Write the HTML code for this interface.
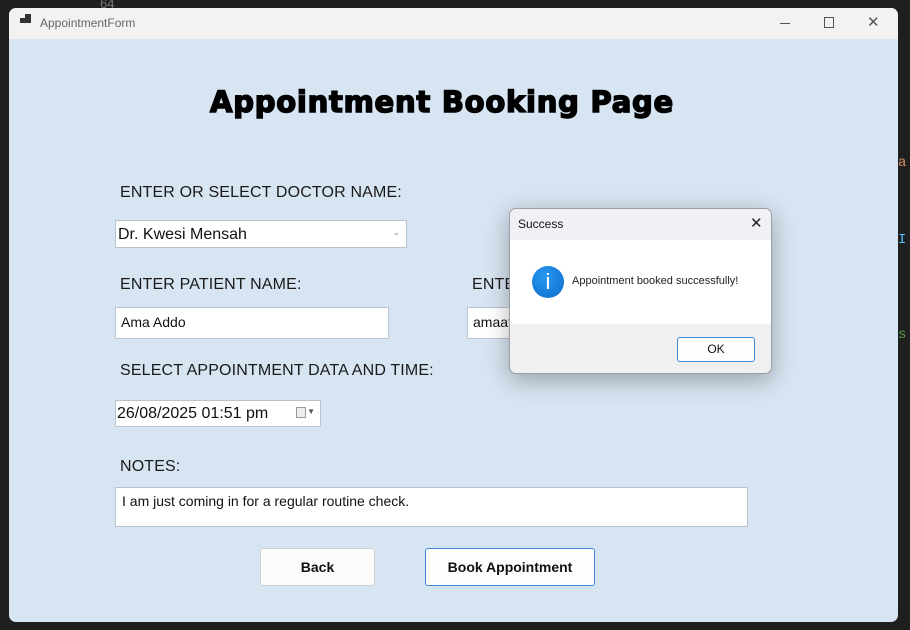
<!DOCTYPE html>
<html><head><style>
*{margin:0;padding:0;box-sizing:border-box}
body{width:910px;height:630px;background:#1f1f1f;position:relative;overflow:hidden;font-family:"Liberation Sans",sans-serif}
.win{position:absolute;left:9px;top:8px;width:889px;height:614px;background:#d7e4f1;border-radius:7px;overflow:hidden}
.tb{position:absolute;left:0;top:0;width:100%;height:31px;background:#f2f2f2}
.a{position:absolute;white-space:nowrap}
.lbl{font-size:16px;color:#1a1a1a;letter-spacing:0.15px}
.box{position:absolute;background:#fff;border:1px solid #b8c3ce;font-size:14px;color:#111}
.btn{position:absolute;background:#fbfbfb;border:1px solid #d0d0d0;border-radius:3px;font-size:14px;font-weight:bold;text-align:center;color:#111}
</style></head><body>
<div class="a" style="left:100px;top:-4px;color:#777;font-size:13px">64</div>
<div class="win">
 <div class="tb">
  <div class="a" style="left:11px;top:10px;width:5px;height:5px;background:#333"></div>
  <div class="a" style="left:16px;top:6px;width:6px;height:9px;background:#333"></div>
  <div class="a" style="left:31px;top:8px;font-size:12px;color:#666">AppointmentForm</div>
  <div class="a" style="left:771px;top:15px;width:10px;height:1px;background:#555"></div>
  <div class="a" style="left:815px;top:9px;width:10px;height:11px;border:1px solid #555"></div>
  <div class="a" style="left:858px;top:5px;font-size:15px;color:#555">✕</div>
 </div>
 <div class="a" style="left:201px;top:77px;font-size:29px;font-weight:900;font-family:'DejaVu Sans',sans-serif;letter-spacing:0.75px;color:#000;-webkit-text-stroke:1.5px #000">Appointment Booking Page</div>
 <div class="a lbl" style="left:111px;top:176px">ENTER OR SELECT DOCTOR NAME:</div>
 <div class="box" style="left:106px;top:212px;width:292px;height:28px;font-size:16px;padding:5px 2px">Dr. Kwesi Mensah<span style="position:absolute;right:6px;top:6px;font-size:9px;color:#888">&#8964;</span></div>
 <div class="a lbl" style="left:111px;top:268px">ENTER PATIENT NAME:</div>
 <div class="a lbl" style="left:463px;top:268px">ENTE</div>
 <div class="box" style="left:106px;top:299px;width:274px;height:32px;padding:6px 5px">Ama Addo</div>
 <div class="box" style="left:458px;top:299px;width:60px;height:32px;padding:6px 5px">amaat</div>
 <div class="a lbl" style="left:111px;top:354px">SELECT APPOINTMENT DATA AND TIME:</div>
 <div class="box" style="left:106px;top:392px;width:206px;height:27px;font-size:16px;padding:4px 1px">26/08/2025 01:51 pm<span style="position:absolute;right:14px;top:6px;width:10px;height:11px;border:1px solid #999;background:#eee"></span><span style="position:absolute;right:5px;top:6px;font-size:8px;color:#555">▼</span></div>
 <div class="a lbl" style="left:111px;top:450px">NOTES:</div>
 <div class="box" style="left:106px;top:479px;width:633px;height:40px;padding:5px 6px">I am just coming in for a regular routine check.</div>
 <div class="btn" style="left:251px;top:540px;width:115px;height:38px;line-height:37px">Back</div>
 <div class="btn" style="left:416px;top:540px;width:170px;height:38px;line-height:37px;border-color:#3f8ad8;background:#fdfdfd">Book Appointment</div>
</div>
<div class="a" style="left:898px;top:155px;font-family:'Liberation Mono';font-size:14px;color:#d7906a">a</div>
<div class="a" style="left:898px;top:232px;font-family:'Liberation Mono';font-size:14px;color:#4fc1ff">I</div>
<div class="a" style="left:898px;top:327px;font-family:'Liberation Mono';font-size:14px;color:#5a9e4a">s</div>
<div class="a" style="left:509px;top:208px;width:263px;height:166px;background:#f0f0f0;border:1px solid #9aa0a8;border-radius:7px;overflow:hidden;box-shadow:0 6px 24px rgba(0,0,0,0.3)">
 <div class="a" style="left:0;top:0;width:100%;height:31px;background:#f1f1f5"></div>
 <div class="a" style="left:8px;top:8px;font-size:12px;color:#111">Success</div>
 <div class="a" style="left:240px;top:5px;font-size:15px;color:#222">✕</div>
 <div class="a" style="left:0;top:31px;width:100%;height:84px;background:#fff"></div>
 <div class="a" style="left:22px;top:57px;width:32px;height:32px;border-radius:50%;background:radial-gradient(circle at 40% 35%,#2a9af0,#0a6acc);color:#fff;text-align:center;font-size:22px;line-height:32px">i</div>
 <div class="a" style="left:62px;top:66px;font-size:11px;color:#222">Appointment booked successfully!</div>
 <div class="a" style="left:167px;top:128px;width:78px;height:25px;background:#fdfdfd;border:1px solid #3f8ad8;border-radius:3px;font-size:12px;text-align:center;line-height:23px;color:#111">OK</div>
</div>
</body></html>
